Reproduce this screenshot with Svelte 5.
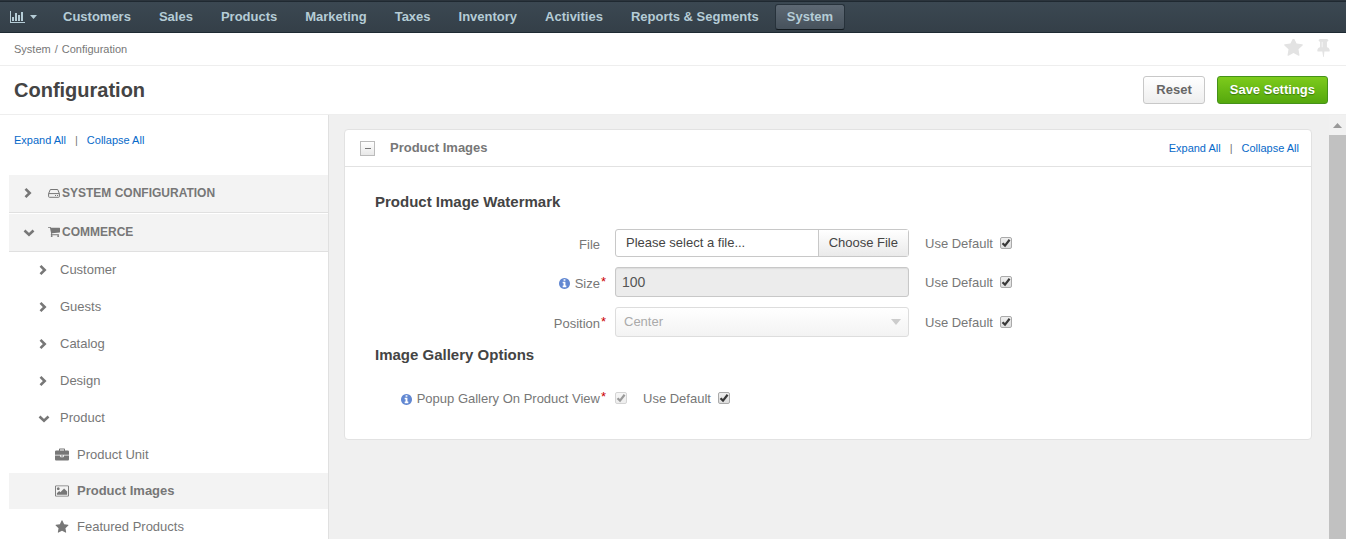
<script>
  const nav = ['Customers', 'Sales', 'Products', 'Marketing', 'Taxes', 'Inventory', 'Activities', 'Reports & Segments', 'System'];
  const groups = ['Customer', 'Guests', 'Catalog', 'Design', 'Product'];
  const star =
    'M1728 647q0 22-26 48l-363 354 86 500q1 7 1 20 0 21-10.5 35.5t-30.5 14.5q-19 0-40-12l-449-236-449 236q-22 12-40 12-21 0-31.5-14.5t-10.5-35.5q0-6 2-20l86-500-364-354q-25-27-25-48 0-37 56-46l502-73 225-455q19-41 49-41t49 41l225 455 502 73q56 9 56 46z';
  const pin =
    'M800 864v-448q0-14-9-23t-23-9-23 9-9 23v448q0 14 9 23t23 9 23-9 9-23zm672 352q0 26-19 45t-45 19h-429l-51 483q-2 12-10.5 20.5t-20.5 8.5h-1q-27 0-32-27l-76-485h-404q-26 0-45-19t-19-45q0-123 78.5-221.5t177.5-98.5v-512q-52 0-90-38t-38-90 38-90 90-38h640q52 0 90 38t38 90-38 90-90 38v512q99 0 177.5 98.5t78.5 221.5z';
  const cart =
    'M704 1536q0 52-38 90t-90 38-90-38-38-90 38-90 90-38 90 38 38 90zm896 0q0 52-38 90t-90 38-90-38-38-90 38-90 90-38 90 38 38 90zm128-1088v512q0 24-16.5 42.5t-40.5 21.5l-1044 122q13 60 13 70 0 16-24 64h920q26 0 45 19t19 45-19 45-45 19h-1024q-26 0-45-19t-19-45q0-11 8-31.5t16-36 21.5-40 15.5-29.5l-177-823h-204q-26 0-45-19t-19-45 19-45 45-19h256q16 0 28.5 6.5t19.5 15.5 13 24.5 8 26 5.5 29.5 4.5 26h1201q26 0 45 19t19 45z';
  const info =
    'M1152 1376v-160q0-14-9-23t-23-9h-96v-512q0-14-9-23t-23-9h-320q-14 0-23 9t-9 23v160q0 14 9 23t23 9h96v320h-96q-14 0-23 9t-9 23v160q0 14 9 23t23 9h448q14 0 23-9t9-23zm-128-896v-160q0-14-9-23t-23-9h-192q-14 0-23 9t-9 23v160q0 14 9 23t23 9h192q14 0 23-9t9-23zm640 416q0 209-103 385.5t-279.5 279.5-385.5 103-385.5-103-279.5-279.5-103-385.5 103-385.5 279.5-279.5 385.5-103 385.5 103 279.5 279.5 103 385.5z';
  const briefcase =
    'M640 256h512v-128h-512v128zm1152 640v480q0 66-47 113t-113 47h-1472q-66 0-113-47t-47-113v-480h672v160q0 26 19 45t45 19h320q26 0 45-19t19-45v-160h672zm-768 0v128h-256v-128h256zm768-480v384h-1792v-384q0-66 47-113t113-47h352v-160q0-40 28-68t68-28h576q40 0 68 28t28 68v160h352q66 0 113 47t47 113z';
  const picture =
    'M576 576q0 80-56 136t-136 56-136-56-56-136 56-136 136-56 136 56 56 136zm1024 384v448h-1408v-192l320-320 160 160 512-512zm96-704h-1600q-13 0-22.5 9.5t-9.5 22.5v1216q0 13 9.5 22.5t22.5 9.5h1600q13 0 22.5-9.5t9.5-22.5v-1216q0-13-9.5-22.5t-22.5-9.5zm160 32v1216q0 66-47 113t-113 47h-1600q-66 0-113-47t-47-113v-1216q0-66 47-113t113-47h1600q66 0 113 47t47 113z';
  const leaves = [
    { name: 'Product Unit', d: briefcase, box: '0 -64 1792 1792' },
    { name: 'Product Images', d: picture, box: '-64 -64 1920 1920', active: true },
    { name: 'Featured Products', d: star, box: '0 0 1792 1792' }
  ];
</script>

{#snippet chevron(open)}
  <svg class="chevron" viewBox="0 0 12 12" aria-hidden="true">
    <path d={open ? 'M1.5 4.5 6 8.7l4.5-4.2' : 'M2.5 1.8 6.7 6l-4.2 4.2'} fill="none" stroke="currentColor" stroke-width="2.6" />
  </svg>
{/snippet}

{#snippet toggles()}
  <span class="toggles"><a href="#expand">Expand All</a><span>|</span><a href="#collapse">Collapse All</a></span>
{/snippet}

{#snippet infoIcon()}
  <svg class="info" viewBox="128 128 1536 1536" aria-hidden="true"><path d={info} /></svg>
{/snippet}

{#snippet useDefault(id)}
  <span class="default"><label for={id}>Use Default</label><input {id} type="checkbox" checked /></span>
{/snippet}

<div class="app">
  <nav>
    <button class="dash" aria-label="Dashboards">
      <svg viewBox="0 0 15 12" width="15" height="12" aria-hidden="true">
        <path d="M0 0h1v11h14v1H0zM2 6h2v4H2zM5 2h2v8H5zM8 4h2v6H8zM11 1h2v9h-2z" />
      </svg>
      <svg viewBox="0 0 7 4" width="7" height="4" aria-hidden="true"><path d="M0 0h7L3.5 4z" /></svg>
    </button>
    {#each nav as item}
      <a href="#nav" class:current={item === 'System'}>{item}</a>
    {/each}
  </nav>

  <div class="crumbs">
    <span class="trail"><a href="#system">System</a><span>/</span><span>Configuration</span></span>
    <button aria-label="Favorite"><svg viewBox="64 128 1664 1600" width="19" height="18"><path d={star} /></svg></button>
    <button aria-label="Pin"><svg viewBox="320 128 1152 1664" width="13" height="18"><path d={pin} /></svg></button>
  </div>

  <header>
    <h1>Configuration</h1>
    <button class="btn">Reset</button>
    <button class="btn save">Save Settings</button>
  </header>

  <div class="body">
    <aside>
      <div class="side-toggles">{@render toggles()}</div>
      <a class="section" href="#sysconf">
        {@render chevron(false)}
        <svg class="sec-icon" viewBox="0 0 12 12" aria-hidden="true">
          <path d="M.6 6.6 2.3 2.5h7.4l1.7 4.1v2.9q0 .8-.8.8H1.4q-.8 0-.8-.8zM.6 6.6h10.8M7 8.5h1M9 8.5h1" fill="none" stroke="currentColor" />
        </svg>
        <span>SYSTEM CONFIGURATION</span>
      </a>
      <a class="section" href="#commerce">
        {@render chevron(true)}
        <svg class="sec-icon" viewBox="64 128 1664 1664" aria-hidden="true"><path d={cart} /></svg>
        <span>COMMERCE</span>
      </a>
      {#each groups as g}
        <a class="group" href="#group">{@render chevron(g === 'Product')}<span>{g}</span></a>
      {/each}
      {#each leaves as leaf}
        <a class="leaf" class:active={leaf.active} href="#leaf">
          <svg viewBox={leaf.box} aria-hidden="true"><path d={leaf.d} /></svg><span>{leaf.name}</span>
        </a>
      {/each}
    </aside>

    <main>
      <section class="panel">
        <div class="panel-head">
          <button class="minus" aria-label="Collapse"></button>
          <h2>Product Images</h2>
          {@render toggles()}
        </div>
        <div class="panel-body">
          <h3>Product Image Watermark</h3>
          <div class="row">
            <span class="name"><label for="file">File</label><em></em></span>
            <span class="control file">
              <input id="file" type="text" readonly value="Please select a file..." /><button>Choose File</button>
            </span>
            {@render useDefault('file-default')}
          </div>
          <div class="row">
            <span class="name">{@render infoIcon()}<label for="size">Size</label><em>*</em></span>
            <input id="size" class="control size" type="text" disabled value="100" />
            {@render useDefault('size-default')}
          </div>
          <div class="row">
            <span class="name"><label for="position">Position</label><em>*</em></span>
            <select id="position" class="control" disabled><option>Center</option></select>
            {@render useDefault('position-default')}
          </div>
          <h3>Image Gallery Options</h3>
          <div class="row last">
            <span class="name">{@render infoIcon()}<label for="popup">Popup Gallery On Product View</label><em>*</em></span>
            <input id="popup" type="checkbox" checked disabled />
            {@render useDefault('popup-default')}
          </div>
        </div>
      </section>
    </main>
    <div class="scroll" aria-hidden="true">
      <svg viewBox="0 0 9 5" width="9" height="5"><path d="M0 5h9L4.5 0z" /></svg>
      <div class="thumb"></div>
    </div>
  </div>
</div>

<style>
  :global(body) {
    margin: 0;
  }
  .app,
  .app :global(*) {
    box-sizing: border-box;
  }
  .app {
    display: flex;
    flex-direction: column;
    height: 100vh;
    overflow: hidden;
    background: #fff;
    color: #777;
    font: 13px/20px 'Liberation Sans', Arial, sans-serif;
  }
  button,
  input,
  select {
    margin: 0;
    font: inherit;
    color: inherit;
  }
  button {
    padding: 0;
    border: 0;
    background: none;
  }
  a {
    color: inherit;
    text-decoration: none;
  }
  svg {
    display: block;
    flex: none;
    fill: currentColor;
  }
  h1,
  h2,
  h3 {
    margin: 0;
  }

  nav {
    display: flex;
    flex: none;
    align-items: center;
    gap: 4px;
    height: 33px;
    padding: 1px 10px 0;
    border-top: 1px solid #2b343c;
    border-bottom: 1px solid #1e2a33;
    background: linear-gradient(#1f2931 1px, #3b4852 1px, #343f48);
    color: #b5ccd6;
    font-weight: bold;
    white-space: nowrap;
  }
  .dash {
    display: flex;
    align-items: center;
    gap: 5px;
    width: 37px;
  }
  nav a {
    padding: 2px 11px;
    border: 1px solid transparent;
    border-radius: 3px;
  }
  nav a.current {
    border-color: #27323b;
    border-bottom-color: #12191e;
    background: linear-gradient(#5d6873, #47525c);
  }

  .crumbs {
    display: flex;
    flex: none;
    align-items: center;
    gap: 14px;
    height: 33px;
    padding: 0 16px 0 14px;
    border-bottom: 1px solid #eee;
    font-size: 11px;
    color: #e3e3e3;
  }
  .trail {
    display: flex;
    flex: 1;
    gap: 4px;
    color: #777;
  }
  .crumbs button {
    padding-bottom: 2px;
  }

  header {
    display: flex;
    flex: none;
    align-items: center;
    gap: 12px;
    height: 48px;
    padding: 0 18px 0 14px;
  }
  h1 {
    flex: 1;
    font-size: 20px;
    color: #444;
  }
  .btn {
    height: 28px;
    padding: 0 12px;
    border: 1px solid #c8c8c8;
    border-radius: 3px;
    background: linear-gradient(#fff, #eee);
    color: #666;
    font-weight: bold;
  }
  .save {
    border-color: #45921a;
    background: linear-gradient(#7dcb1c, #55a80d);
    color: #fff;
    text-shadow: 0 1px 1px #3a7a0a;
  }

  .body {
    display: flex;
    flex: 1;
    min-height: 0;
    border-top: 1px solid #eee;
    background: #f0f0f0;
  }
  aside {
    width: 329px;
    flex: none;
    padding-left: 9px;
    overflow: hidden;
    border-right: 1px solid #e0e0e0;
    background: #fff;
  }
  .side-toggles {
    height: 60px;
    padding: 15px 5px;
  }
  .toggles {
    display: flex;
    gap: 9px;
    font-size: 11px;
  }
  .toggles a {
    color: #0769c9;
  }
  .chevron {
    width: 12px;
    height: 12px;
  }
  .section {
    display: flex;
    align-items: center;
    height: 38px;
    margin-bottom: 1px;
    padding: 0 14px 2px;
    border-bottom: 1px solid #e0e0e0;
    background: #f3f3f3;
    font-size: 12px;
    font-weight: bold;
  }
  .sec-icon {
    width: 12px;
    height: 12px;
    margin: 0 2px 0 13px;
  }
  .section + .group {
    margin-top: -1px;
  }
  .group {
    display: flex;
    align-items: center;
    gap: 10px;
    height: 37px;
    padding: 0 29px 2px;
  }
  .leaf {
    display: flex;
    align-items: center;
    gap: 8px;
    height: 36px;
    padding: 0 46px;
  }
  .leaf svg {
    width: 14px;
    height: 14px;
  }
  .leaf.active {
    background: #f3f3f3;
    font-weight: bold;
  }

  main {
    flex: 1;
    min-width: 0;
    padding: 14px 17px 14px 15px;
  }
  .panel {
    border: 1px solid #e2e2e2;
    border-radius: 4px;
    background: #fff;
  }
  .panel-head {
    display: flex;
    align-items: center;
    gap: 15px;
    height: 37px;
    padding: 0 12px 0 15px;
    border-bottom: 1px solid #e2e2e2;
  }
  h2 {
    flex: 1;
    font-size: 13px;
    line-height: 20px;
  }
  .minus {
    display: grid;
    place-items: center;
    width: 15px;
    height: 15px;
    border: 1px solid #bbb;
    background: linear-gradient(#fff, #e8e8e8);
  }
  .minus::before {
    content: '';
    width: 6px;
    height: 1px;
    background: #777;
  }
  .panel-body {
    padding: 25px 30px 30px;
  }
  h3 {
    font-size: 15px;
    line-height: 20px;
    color: #444;
  }
  .row {
    display: flex;
    align-items: center;
    margin-top: 10px;
  }
  h3 + .row {
    margin-top: 17px;
  }
  h3 + .last {
    margin-top: 21px;
  }
  .row + h3 {
    margin-top: 8px;
  }
  .name {
    display: flex;
    align-items: center;
    justify-content: flex-end;
    gap: 1px;
    width: 231px;
    margin-right: 9px;
    padding-top: 3px;
    white-space: nowrap;
  }
  em {
    width: 5px;
    font-style: normal;
    color: #c00;
    line-height: 16px;
    padding-bottom: 4px;
  }
  .info {
    width: 11px;
    height: 11px;
    margin-right: 4px;
    fill: #6288d2;
  }
  .control {
    width: 294px;
    height: 30px;
    border: 1px solid #c8c8c8;
    border-radius: 3px;
  }
  .file {
    display: flex;
    height: 28px;
    color: #444;
  }
  .file input {
    flex: 1;
    min-width: 0;
    padding: 0 10px;
    border: 0;
    background: none;
  }
  .file button {
    padding: 0 10px;
    border-left: 1px solid #c8c8c8;
    background: linear-gradient(#fff, #eaeaea);
  }
  .size {
    padding: 0 6px;
    background: #ececec;
    box-shadow: inset 0 1px 1px #ddd;
    font-size: 14px;
    color: #555;
  }
  select {
    appearance: none;
    padding: 0 8px;
    background:
      url("data:image/svg+xml,%3Csvg xmlns='http://www.w3.org/2000/svg' width='10' height='6'%3E%3Cpath d='M0 0h10L5 6z' fill='%23ccc'/%3E%3C/svg%3E") no-repeat right 7px center,
      linear-gradient(#fff, #f3f3f3);
    color: #aaa;
  }
  select.control {
    border-color: #ddd;
  }
  select:disabled {
    opacity: 1;
  }
  .default {
    display: flex;
    align-items: center;
    gap: 7px;
    margin-left: 16px;
  }
  .default label {
    padding-top: 2px;
  }
  input[type='checkbox'] {
    appearance: none;
    width: 12px;
    height: 12px;
    border: 1px solid #aaa;
    border-radius: 2px;
    background:
      url("data:image/svg+xml,%3Csvg xmlns='http://www.w3.org/2000/svg' width='10' height='10'%3E%3Cpath d='M1.5 5.2 4 7.6 8.6 1.8' fill='none' stroke='%23383838' stroke-width='2.2'/%3E%3C/svg%3E") no-repeat center,
      linear-gradient(#eee, #ddd);
  }
  input[type='checkbox']:disabled {
    opacity: 0.5;
  }

  .scroll {
    display: flex;
    flex-direction: column;
    align-items: center;
    width: 17px;
    flex: none;
    gap: 7px;
    padding-top: 8px;
    background: #f1f1f1;
    color: #999;
  }
  .thumb {
    flex: 1;
    align-self: stretch;
    background: #c1c1c1;
  }
</style>
